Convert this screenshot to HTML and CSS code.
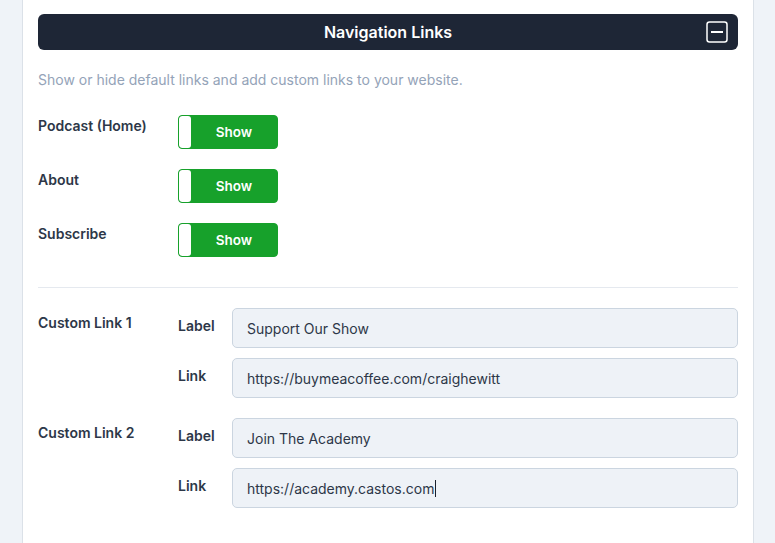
FILE: index.html
```html
<!DOCTYPE html>
<html lang="en">
<head>
  <meta charset="UTF-8">
  <meta name="viewport" content="width=device-width, initial-scale=1.0">
  <title>Navigation Links</title>
  <link rel="stylesheet" href="styles.css">
</head>
<body>
  <div class="panel">
    <div class="panel-header">
      <span class="panel-title">Navigation Links</span>
      <button class="collapse-btn" aria-label="Collapse">
        <svg width="22" height="22" viewBox="0 0 22 22" fill="none" stroke="#fff" stroke-width="1.5">
          <rect x="1" y="1" width="20" height="20" rx="2.5"/>
          <line x1="5" y1="11" x2="17" y2="11" stroke-width="2"/>
        </svg>
      </button>
    </div>

    <p class="description">Show or hide default links and add custom links to your website.</p>

    <div class="toggle-list">
      <div class="toggle-row">
        <span class="row-label">Podcast (Home)</span>
        <div class="toggle"><span class="knob"></span><span class="toggle-text">Show</span></div>
      </div>
      <div class="toggle-row">
        <span class="row-label">About</span>
        <div class="toggle"><span class="knob"></span><span class="toggle-text">Show</span></div>
      </div>
      <div class="toggle-row">
        <span class="row-label">Subscribe</span>
        <div class="toggle"><span class="knob"></span><span class="toggle-text">Show</span></div>
      </div>
    </div>

    <hr class="divider">

    <div class="custom-links">
      <div class="custom-group">
        <span class="group-label">Custom Link 1</span>
        <div class="fields">
          <div class="field-row">
            <span class="field-label">Label</span>
            <div class="field">Support Our Show</div>
          </div>
          <div class="field-row">
            <span class="field-label">Link</span>
            <div class="field">https://buymeacoffee.com/craighewitt</div>
          </div>
        </div>
      </div>
      <div class="custom-group">
        <span class="group-label">Custom Link 2</span>
        <div class="fields">
          <div class="field-row">
            <span class="field-label">Label</span>
            <div class="field">Join The Academy</div>
          </div>
          <div class="field-row">
            <span class="field-label">Link</span>
            <div class="field focused">https://academy.castos.com<span class="caret"></span></div>
          </div>
        </div>
      </div>
    </div>
  </div>
</body>
</html>
```
FILE: styles.css
```css
body {
  margin: 0;
  background-color: #eff3f8;
  font-family: 'Inter', 'Liberation Sans', sans-serif;
  color: #2d3748;
}

.panel {
  margin-left: 22px;
  width: 732px;
  min-height: 543px;
  box-sizing: border-box;
  padding: 14px 15px 30px;
  background-color: #fff;
  border-left: 1px solid #dbe1e8;
  border-right: 1px solid #dbe1e8;
}

.panel-header {
  position: relative;
  height: 36px;
  display: flex;
  justify-content: center;
  align-items: center;
  background-color: #1e2636;
  border-radius: 6px;
}

.panel-title {
  color: #fff;
  font-size: 16px;
  font-weight: 600;
}

.collapse-btn {
  position: absolute;
  right: 10px;
  top: 7px;
  padding: 0;
  border: 0;
  background: none;
  width: 22px;
  height: 22px;
  display: flex;
}

.description {
  margin: 20px 0 0;
  font-size: 14px;
  line-height: 20px;
  color: #94a3b8;
}

.toggle-list {
  margin-top: 25px;
  display: flex;
  flex-direction: column;
  gap: 20px;
}

.toggle-row {
  display: flex;
  align-items: flex-start;
}

.row-label {
  width: 140px;
  flex-shrink: 0;
  font-size: 14px;
  font-weight: 600;
  line-height: 20px;
  padding-top: 1px;
}

.toggle {
  width: 100px;
  height: 34px;
  box-sizing: border-box;
  display: flex;
  border: 1px solid #17a12b;
  border-radius: 4px;
  background-color: #17a12b;
  overflow: hidden;
}

.knob {
  width: 12px;
  background-color: #fff;
  border-radius: 3px;
}

.toggle-text {
  flex: 1;
  display: flex;
  justify-content: center;
  align-items: center;
  color: #fff;
  font-size: 13.5px;
  font-weight: 600;
}

.divider {
  margin: 30px 0 20px;
  border: 0;
  border-top: 1px solid #e5e9ef;
}

.custom-links {
  display: flex;
  flex-direction: column;
  gap: 20px;
}

.custom-group {
  display: flex;
  align-items: flex-start;
}

.group-label {
  width: 140px;
  flex-shrink: 0;
  font-size: 14px;
  font-weight: 600;
  line-height: 20px;
  padding-top: 5px;
}

.fields {
  flex: 1;
  display: flex;
  flex-direction: column;
  gap: 10px;
}

.field-row {
  display: flex;
  align-items: flex-start;
}

.field-label {
  width: 54px;
  flex-shrink: 0;
  font-size: 14px;
  font-weight: 600;
  line-height: 20px;
  padding-top: 8px;
}

.field {
  flex: 1;
  height: 40px;
  box-sizing: border-box;
  display: flex;
  align-items: center;
  padding: 0 14px;
  background-color: #eef2f7;
  border: 1px solid #cbd5e0;
  border-radius: 5px;
  font-size: 14px;
  color: #2d3748;
}

.caret {
  display: inline-block;
  width: 1px;
  height: 17px;
  margin-left: 1px;
  background-color: #1a202c;
}
```
